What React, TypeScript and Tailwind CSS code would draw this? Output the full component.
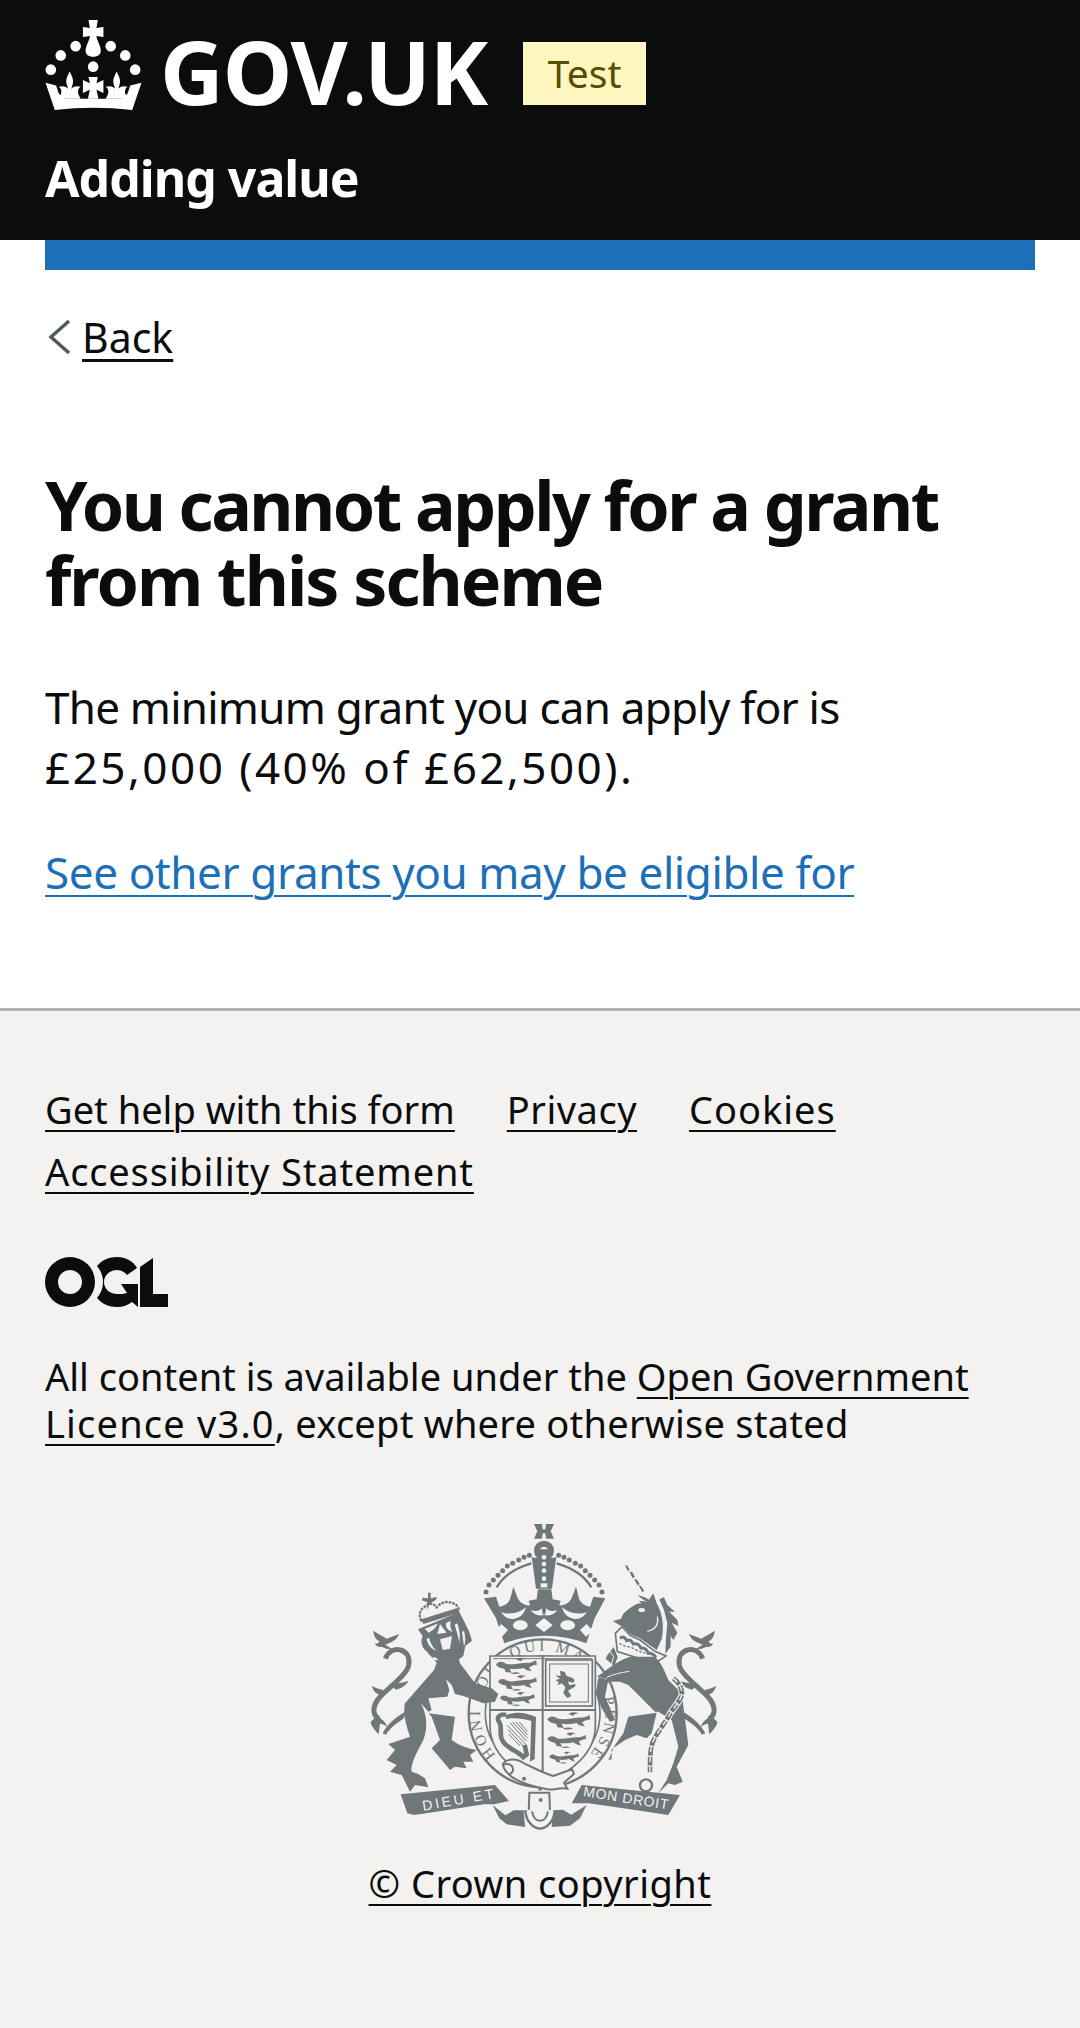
const font = "font-['Noto_Sans',sans-serif]";
const bg = "#f3f2f1";
const ink = "#6f777b";

function Crown() {
  return (
    <svg viewBox="30 24 290 272" className="block w-[97px] h-[90px] shrink-0" fill="#ffffff">
      <path d="M160 24h28l-4 24 21-3v30l-21-3 1 8c6 14 12 28 12 36 0 12-9 19-23 19s-23-7-23-19c0-8 6-22 12-36l1-8-21 3V45l21 3z" />
      <circle cx="121" cy="103" r="16" />
      <circle cx="227" cy="103" r="16" />
      <circle cx="76" cy="131" r="16" />
      <circle cx="271" cy="131" r="16" />
      <circle cx="46" cy="174" r="16" />
      <circle cx="301" cy="174" r="16" />
      <circle cx="174" cy="165" r="16" />
      <path d="M30 214L62 222 70 246 88 262H260L278 246 286 222 320 214 292 296Q174 282 58 296Z" />
      <path d="M103 180C110 195 116 205 112 218L108 232C114 224 124 222 136 226 128 232 126 240 130 250L136 262H70L76 250C80 240 78 232 70 226 82 222 92 224 98 232L94 218C90 205 96 195 103 180Z" />
      <path d="M245 180C252 195 258 205 254 218L250 232C256 224 266 222 278 226 270 232 268 240 272 250L278 262H212L218 250C222 240 220 232 212 226 224 222 234 224 240 232L236 218C232 205 238 195 245 180Z" />
      <path d="M160 196H188L184 215 205 205V245L184 235 190 262H158L164 235 143 245V205L164 215Z" />
    </svg>
  );
}

function OglLogo() {
  return (
    <svg viewBox="0 0 123 50" className="block w-[123px] h-[50px]" fill="#0b0c0c">
      <path fillRule="evenodd" d="M25 0a25 25 0 1 0 0 50 25 25 0 0 0 0-50zm0 13a12 12 0 1 1 0 24 12 12 0 0 1 0-24z" />
      <path d="M72 0c-8 0-15 3-20 9 4 5 6 10 6 16s-2 11-6 16c5 6 12 9 20 9 6 0 11-2 15-5l6 5V27H76l6 9c-3 1-6 1-10 1-7 0-13-5-13-12s6-12 13-12c4 0 8 2 10 5l10-7c-4-7-11-11-20-11z" />
      <path d="M95 10l13-9v36h15v13H95z" />
    </svg>
  );
}

function LionPassant({ x, y, s = 1 }: { x: number; y: number; s?: number }) {
  return (
    <g transform={`translate(${x} ${y}) scale(${s})`}>
      <path d="M0 14C8 0 22 6 30 11c20 6 42-4 72-3 8-3 14-3 18-8l3 14c-9 0-16 4-24 8l8 12-16-4-8-6c-16 4-32 4-42 2l6 12-18-2-4-10C14 24 6 22 0 14z" />
      <path d="M60 -2c8-6 18-6 30-2-8 0-14 4-16 8zM44 40c10-4 20-4 30 0-10 2-20 4-30 0z" />
    </g>
  );
}

function Tail() {
  return (
    <g>
      <path d="M100 392c14 10 28 16 40 24l38-14c-6 12-14 22-28 26l-14 6 22 14c-14 0-24-2-32-8-10 2-14 0-22-8 12 0 14-6 14-8-12-6-18-20-18-32z" />
      <path d="M136 476c8-22 28-32 46-26 20 6 28 24 24 46-4 22-36 48-62 72-24 20-46 42-42 68 4 20 20 24 22 22" fill="none" stroke={ink} strokeWidth="15" />
      <path d="M150 555c20-4 38-8 56-12-8 12-20 22-38 26zM130 570c-12-2-24-6-34-12 2 12 10 22 22 26zM92 665c2 16 14 26 24 38l4-32c8 0 14 4 22 10-8-22-22-26-34-30zM128 700c6-14 24-40 72-68l-10 24c-24 16-42 30-52 48z" />
    </g>
  );
}

function Chain() {
  const d = "M1000 535c14 10 24 26 26 44s-28 46-38 66-42 60-50 82-8 50-8 90";
  return (
    <g fill="none">
      <path d={d} stroke={bg} strokeWidth="20" />
      <path d={d} stroke={ink} strokeWidth="14" strokeDasharray="26 4" />
      <path d={d} stroke={bg} strokeWidth="4" strokeDasharray="16 14" />
    </g>
  );
}

function Arms() {
  return (
    <svg viewBox="0 0 1200 1020" className="block w-[400px] h-[340px]" fill={ink}>
      <Tail />
      <g transform="translate(1224 0) scale(-1 1)">
        <Tail />
      </g>

      {/* royal crown */}
      <path d="M594 72h12l2 16h8l2-16h24l-10 22 10 22h-24l-2-16h-8l-2 16h-24l10-22-10-22h12z" />
      <circle cx="612" cy="152" r="30" />
      <path d="M575 170c10 6 64 6 74 0l-13 96h-48z" />
      <g fill={bg}>
        <path d="M600 148a13 13 0 0 1 24 0z" />
        <circle cx="612" cy="172" r="7" />
        <circle cx="612" cy="192" r="7" />
        <circle cx="612" cy="212" r="7" />
        <circle cx="612" cy="236" r="7" />
        <rect x="602" y="250" width="20" height="12" />
      </g>
      {[
        [438, 276], [447, 255], [460, 240], [474, 226], [488, 212], [502, 198], [518, 190], [536, 180], [552, 172], [568, 166],
        [786, 276], [777, 255], [764, 240], [750, 226], [736, 212], [722, 198], [706, 190], [688, 180], [672, 172], [656, 166],
      ].map(([x, y]) => (
        <circle key={`${x}-${y}`} cx={x} cy={y} r="7.5" />
      ))}
      <path d="M470 262c20-34 56-58 104-72M754 262c-20-34-56-58-104-72" fill="none" stroke={ink} strokeWidth="7" />
      <path d="M432 295l36-5 10 30c18-2 30-12 34-28l8-32 12 32c6 16 22 26 38 24l-4-14 24-4 4-30h40l4 30 24 4-4 14c16 2 32-8 38-24l12-32 8 32c4 16 16 26 34 28l10-30 36 5-32 60-15 45-10 30c-80-30-166-30-246 0l-10-30-15-45z" />
      <g fill={bg}>
        <ellipse cx="541" cy="376" rx="22" ry="15" />
        <path d="M612 354l26 22-26 20-26-20z" />
        <ellipse cx="683" cy="376" rx="22" ry="15" />
        <path d="M484 372l20 18-18 20-20-18zM740 372l-20 18 18 20 20-18z" />
        <path d="M484 336c24 10 52 4 74-14-6 20-16 30-34 34-18 4-32-6-40-20zM740 336c-24 10-52 4-74-14 6 20 16 30 34 34 18 4 32-6 40-20z" />
        <path d="M572 330c14 6 28 2 34-6 0 12 2 18 6 24 4-6 6-12 6-24 6 8 20 12 34 6-8 14-26 20-40 14-14 6-32 0-40-14z" />
      </g>

      {/* garter */}
      <circle cx="608" cy="640" r="222" fill={bg} stroke={ink} strokeWidth="7" />
      <circle cx="608" cy="640" r="172" fill="none" stroke={ink} strokeWidth="5" />
      <path id="garter" d="M468 765A188 188 0 1 1 748 765" fill="none" />
      <text fontFamily="'Liberation Serif',serif" fontSize="46">
        <textPath href="#garter" textLength="860" lengthAdjust="spacing">
          HONI SOIT QUI MAL Y PENSE
        </textPath>
      </text>

      {/* shield */}
      <path d="M450 468h316v210c0 80-70 140-158 172-88-32-158-92-158-172z" fill={bg} stroke={ink} strokeWidth="5" />
      <path d="M459 476h298" stroke={ink} strokeWidth="3" />
      <path d="M608 468v382M450 630h316" stroke={ink} strokeWidth="6" fill="none" />
      <LionPassant x={468} y={480} s={1} />
      <LionPassant x={474} y={532} s={0.95} />
      <LionPassant x={480} y={582} s={0.85} />
      <LionPassant x={622} y={644} s={1.05} />
      <LionPassant x={622} y={704} s={0.95} />
      <LionPassant x={628} y={760} s={0.72} />

      {/* tressure and rampant lion */}
      <rect x="617" y="480" width="140" height="138" fill="none" stroke={ink} strokeWidth="5" />
      <rect x="629" y="492" width="116" height="114" fill="none" stroke={ink} strokeWidth="3" />
      <path d="M660 512l14 4 6 12 18 6c8 6 6 12 0 14l-14-4 4 12 18-4c2 8-4 10-8 12l-14 8 10 16-12 6-12-14 6-18-10-12-14 6 4-10-10-6 14-4-14-10 16 2z" />

      {/* harp */}
      <path d="M498 645c-20-6-30 8-20 22 10 16-2 38 10 56 12 22 42 28 62 48l10-8-6-28" fill="none" stroke={ink} strokeWidth="14" />
      <path d="M498 645c30-12 60-8 90 6l-4 126-14 8 4-122c-26-8-52-10-76-6z" />
      <g stroke={ink} strokeWidth="3">
        <path d="M510 668l50 56M518 666l44 48M528 666l34 38M538 666l24 28M502 676l56 58M504 688l46 50M506 702l34 36" />
      </g>

      {/* lion */}
      <path d="M282 360l2-24-14-4-2-9 18 2 0-17 8 0 0 17 18-4-2 9-16 8z" transform="translate(-22 -30)" />
      <path d="M244 362c-8-16-6-30 8-40 4-6 10-6 14-12 10 0 18 4 24 12 10-12 26-20 44-14 10 2 18 8 22 18l-2 10z" fill="none" stroke={ink} strokeWidth="7" strokeDasharray="8 3" />
      <path d="M244 358l108-34 6 14-108 34z" />
      <path d="M290 490c-4-14-20-20-28-34-12-8-24-26-14-48l-14-20 124-52c8 16 18 34 30 60l8 26-20 16-6 30-24 18c-16 12-36 12-56 4z" />
      <g fill={bg}>
        <path d="M254 386c14-4 28-10 40-16-6 12-14 22-28 28zM300 372l20 26-28 4zM332 362c-2 12-2 22 6 34-14-4-22-14-20-26z" />
        <path d="M300 418l36-10-6 38-22 4z" />
        <path d="M352 370c6 20 10 36 6 56-4-20-10-38-14-52zM372 392c4 16 6 32 0 48l-6-44zM268 414c4 18 10 28 22 38-18-6-28-20-30-36zM282 470l20 12-26-4z" />
      </g>
      <g transform="translate(60 510)">
        <path d="M245-60L222 0 135 100C128 130 138 165 150 200L115 212 85 222 105 240 80 270 110 285 90 305 125 315 150 365 165 345 205 352 195 325 175 312 155 305C150 280 175 240 190 210 205 170 200 130 182 98L205 125 215 120 205 85 262 80 268 60 258 28 275 45 285 72 310 78 350 92 370 100 405 95 415 72 395 55 345 40 300-20 290-60Z" />
        <path d="M205 130L285 140 275 210C295 225 320 235 350 240L330 255 340 275 310 275 320 295 285 290 270 300 245 270 215 235 240 210 215 140Z" />
      </g>

      {/* unicorn */}
      <g transform="translate(600 30)">
        <path d="M255 165l8 3 6 12-6 3zM268 184l9 3 8 14-8 3zM282 206l9 3 8 14-7 3zM296 226l8 3 9 14-7 3z" />
        <path d="M292 256c16 2 30 8 40 18l-6 6c-12-8-24-16-34-24zM296 272c12 0 22 2 30 8l-4 4c-10-2-20-6-26-12z" />
        <path d="M218 333L244 326C244 312 265 296 290 282L322 276 340 250 350 280C368 310 372 350 366 385L350 420 300 385 270 372 250 350 238 345Z" />
        <path d="M358 268L372 262 382 285 405 305 388 305 412 330 415 348 395 338 412 368 400 390 392 378 392 410 376 432 378 385 382 340 372 300Z" />
        <path d="M226 370L246 350 270 376 300 390 345 424 378 438 345 460 232 425Z" fill={bg} stroke={ink} strokeWidth="5" />
        <path d="M240 385Q252 375 260 392 272 385 280 402 295 398 303 414 318 412 325 430 338 428 348 442" fill="none" stroke={ink} strokeWidth="9" />
        <path d="M238 400l16 8 20 4 18 10 24 8" fill="none" stroke={ink} strokeWidth="4" strokeDasharray="8 5" />
        <ellipse cx="305" cy="300" rx="10" ry="6" fill={bg} />
        <ellipse cx="243" cy="313" rx="6" ry="4" fill={bg} />
        <path d="M352 320c4 22-2 38-30 44" fill="none" stroke={bg} strokeWidth="4" />
        <path d="M195 445l26-34 12 30-10 28z" />
        <path d="M205 418l16 22-8 26-20-10z" fill="none" stroke={bg} strokeWidth="3" />
      </g>
      <g transform="translate(600 510)">
        <path d="M170 20C195 5 225-25 270-40L345-40C365-20 375 5 385 30L425 70 445 225 410 290 428 335 405 345 385 340 355 370 380 330 400 280 415 230 395 150 355 125 345 125 290 70 265 45 240 35 210 35 195 25Z" />
        <path d="M175 22L205 30 195 80 215 125 225 150 210 155 185 115 168 70Z" />
        <path d="M265 140L350 128 335 190 320 205 290 195 255 210 215 238 215 268 205 270 225 225 250 190Z" />
        <path d="M200 22c18-8 40-14 68-18" fill="none" stroke={bg} strokeWidth="3" />
      </g>
      <Chain />
      <circle cx="918" cy="856" r="18" fill="none" stroke={ink} strokeWidth="7" />

      {/* scroll and motto */}
      <g transform="translate(60 510)">
        <path d="M122 373l283-28 42 48-45 10-30 0c-70 10-140 24-210 32l-20-5z" />
        <path d="M398 405l20 40 22 18 55 8-4-50-30 0-25 15z" />
      </g>
      <g transform="translate(600 510)">
        <path d="M125 345l295 30-35 60c-80-12-160-24-240-35l-50 0z" />
        <path d="M140 405l-20 40-30 22-55 4 4-50 30-2 25 15z" />
      </g>
      <path d="M490 790c12-14 40-16 62 0 30 14 60 30 88 38l56-20 6 14-30 26 10 18c-22-6-42 6-60 2-60-12-104-26-122-52-10-12-12-18-10-26z" fill={bg} stroke={ink} strokeWidth="6" />
      <path d="M486 796c10-6 26-6 32 6 4 10-2 18-10 20" fill="none" stroke={ink} strokeWidth="6" />
      <circle cx="552" cy="836" r="6" /><circle cx="600" cy="866" r="6" />
      <path d="M568 878h60l2 58-32 24-32-22z" fill={bg} stroke={ink} strokeWidth="6" />
      <circle cx="602" cy="900" r="6" />
      <path d="M556 930c0 32 24 56 44 56s44-24 44-56" fill={bg} stroke={ink} strokeWidth="7" />
      <path d="M576 934c4 22 14 28 24 28s20-6 24-28" fill="none" stroke={ink} strokeWidth="6" />
      <g fill={bg} fontFamily="'Liberation Sans',sans-serif" fontSize="42">
        <text transform="translate(250 932) rotate(-10)" textLength="216">DIEU ET</text>
        <text transform="translate(728 888) rotate(9)" textLength="258">MON DROIT</text>
      </g>
    </svg>
  );
}

export default function App() {
  return (
    <div className={`${font} min-h-[2028px] bg-white text-[#0b0c0c] flex flex-col`}>
      <header className="bg-[#0b0c0c] h-[240px] px-[45px] pt-[20px] text-white">
        <div className="flex items-start h-[90px]">
          <Crown />
          <span className="ml-[18px] mt-[7px] text-[88px] leading-none font-bold tracking-[-1px]">GOV.UK</span>
          <span className="ml-[36px] mt-[22px] w-[123px] h-[63px] bg-[#fff7bf] text-[#594d00] text-[39px] flex items-center justify-center">
            Test
          </span>
        </div>
        <div className="mt-[38px] text-[50px] leading-[60px] font-bold tracking-[-1px]">Adding value</div>
      </header>
      <div className="mx-[45px] h-[30px] bg-[#1d70b8]" />
      <main className="px-[45px] flex-none h-[738px]">
        <div className="mt-[43px] flex items-center">
          <svg viewBox="0 0 26 36" className="w-[26px] h-[36px]" fill="none" stroke="#505a5f" strokeWidth="3.5">
            <path d="M24 2L6 18l18 16" />
          </svg>
          <a className="ml-[11px] text-[41px] leading-[48px] underline underline-offset-[6px] decoration-[3px]">Back</a>
        </div>
        <h1 className="mt-[106px] text-[68px] leading-[75px] font-bold">
          <span className="block tracking-[-2.5px]">You cannot apply for a grant</span>
          <span className="block tracking-[-1.95px]">from this scheme</span>
        </h1>
        <p className="mt-[60px] text-[44px] leading-[60px]">
          <span className="block tracking-[-0.76px]">The minimum grant you can apply for is</span>
          <span className="block tracking-[2.5px]">£25,000 (40% of £62,500).</span>
        </p>
        <a className="block mt-[45px] text-[44px] leading-[60px] tracking-[-0.4px] text-[#1d70b8] underline underline-offset-[6px] decoration-2">
          See other grants you may be eligible for
        </a>
      </main>
      <footer className="flex-1 bg-[#f3f2f1] border-t-[3px] border-[#b1b4b6] px-[45px] pt-[67px] text-[38px]">
        <div className="flex flex-wrap gap-x-[52px] leading-[62px]">
          <a className="underline underline-offset-[6px] decoration-2">Get help with this form</a>
          <a className="tracking-[0.5px] underline underline-offset-[6px] decoration-2">Privacy</a>
          <a className="tracking-[1px] underline underline-offset-[6px] decoration-2">Cookies</a>
          <a className="tracking-[0.85px] underline underline-offset-[6px] decoration-2">Accessibility Statement</a>
        </div>
        <div className="mt-[55px]">
          <OglLogo />
        </div>
        <p className="mt-[46px] leading-[47px]">
          All content is available under the{" "}
          <a className="underline underline-offset-[6px] decoration-2">Open Government</a>{" "}
          <a className="tracking-[1.2px] underline underline-offset-[6px] decoration-2">Licence v3.0</a>
          <span className="tracking-[0.25px]">, except where otherwise stated</span>
        </p>
        <div className="mt-[53px] flex flex-col items-center">
          <Arms />
          <a className="mt-[19px] leading-[48px] tracking-[0.45px] underline underline-offset-[6px] decoration-2">© Crown copyright</a>
        </div>
      </footer>
    </div>
  );
}
